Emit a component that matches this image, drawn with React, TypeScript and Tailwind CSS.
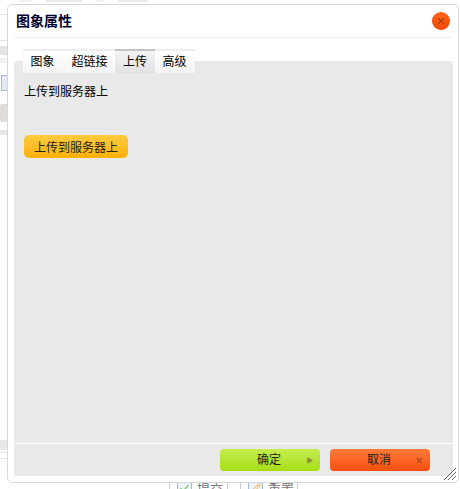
import { Check, Pencil, Play, X } from 'lucide-react';

const font = { fontFamily: '"Noto Sans CJK SC", sans-serif' };

export default function App() {
    return (
        <div className="relative w-[460px] h-[489px] overflow-hidden bg-white" style={font}>
            {/* page behind the dialog */}
            <div className="flex h-[2px] gap-[14px] pl-[20px]">
                <div className="w-[12px] bg-[#f0f0f4]" />
                <div className="w-[36px] bg-[#e8e8ee]" />
                <div className="w-[8px] bg-[#f0f0f4]" />
                <div className="w-[30px] bg-[#e8e8ee]" />
            </div>
            <div className="flex flex-col w-[7px]">
                <div className="h-[27px] mt-[12px] border-y border-[#e4e4e4]" />
                <div className="h-[9px] mt-[5px] bg-[#e4e4e4]" />
                <div className="h-[5px] mt-[3px] bg-[#f0f0f0]" />
                <div className="flex justify-end h-[16px] mt-[12px]">
                    <span className="w-[6px] h-[16px] bg-[#e6eaf6] border border-[#a8b8e0] border-r-0" />
                </div>
                <div className="h-[18px] mt-[13px] bg-[#dedcd9] rounded-l-[2px]" />
                <div className="h-[5px] mt-[8px] bg-[#e6e6e6]" />
                <div className="h-[10px] mt-[305px] bg-[#e8e8e8]" />
                <div className="h-[7px] mt-[2px] border-y border-[#e4e4e4]" />
            </div>
            <div className="absolute left-[169px] top-[482px] flex items-start h-[7px] text-[13px] leading-[14px] text-[#777]">
                <div className="flex h-[7px] w-[59px] pl-[7px] gap-[5px] border-x border-[#cccccc]">
                    <span className="flex justify-center w-[15px] h-[12px] bg-[#eef3fb] border border-[#9db8de] rounded-[2px]">
                        <Check size={11} strokeWidth={3} className="text-[#7ecb7e]" />
                    </span>
                    <span>提交</span>
                </div>
                <div className="flex h-[7px] w-[58px] ml-[12px] pl-[7px] gap-[5px] border-x border-[#cccccc]">
                    <span className="flex justify-center w-[15px] h-[12px] bg-[#eef3fb] border border-[#9db8de] rounded-[2px]">
                        <Pencil size={10} strokeWidth={3} className="text-[#eec98a]" />
                    </span>
                    <span>重置</span>
                </div>
            </div>

            {/* dialog */}
            <div className="absolute left-[7px] top-[4px] w-[452px] h-[479px] flex flex-col bg-white border border-[#d8d8d8] rounded-[5px] pl-[6px] pr-[5px] pb-[6px]">
                <div className="flex items-center justify-between h-[33px] border-b border-[#ececec] mr-[2px]">
                    <span className="text-[14px] font-bold text-[#000030] pl-[2px] pb-[2px]">图象属性</span>
                    <span className="flex items-center justify-center w-[18px] h-[18px] mr-[1px] rounded-full bg-[radial-gradient(circle_at_50%_30%,#ff6a1a,#f23c00)]">
                        <X size={10} strokeWidth={3} className="text-[#b03c10]" />
                    </span>
                </div>
                <div className="relative flex-1 flex flex-col mt-[23px] bg-[#e9e9e9] rounded-[3px]">
                    <div className="absolute left-[9px] top-[-12px] flex h-[24px] text-[12px] text-black border-t-[2px] border-[#eeeeee] bg-gradient-to-b from-white to-[#f4f4f4]">
                        <span className="flex items-center justify-center w-[41px] pb-[2px] pr-[2px]">图象</span>
                        <span className="flex items-center justify-center w-[51px] pb-[2px]">超链接</span>
                        <span className="flex items-center justify-center w-[40px] -mt-[2px] pb-[2px] border-t-[2px] border-[#c4c4c4] bg-gradient-to-b from-[#f4f4f4] to-[#e2e2e2]">上传</span>
                        <span className="flex items-center justify-center w-[40px] pb-[2px] pr-[1px]">高级</span>
                    </div>
                    <div className="flex-1 pt-[21px] pl-[10px]">
                        <div className="text-[12px] leading-[18px] text-black">上传到服务器上</div>
                        <button className="block mt-[35px] w-[104px] h-[23px] rounded-[5px] text-[12px] text-[#222] bg-gradient-to-b from-[#fecb3c] to-[#fbb000]">上传到服务器上</button>
                    </div>
                    <div className="flex items-center justify-end h-[33px] border-t border-white pr-[23px] gap-[10px]">
                        <button className="relative w-[100px] h-[22px] pb-[2px] pr-[2px] rounded-[4px] text-[12px] text-[#222] bg-gradient-to-b from-[#c4ec4c] to-[#a8de0c]">
                            确定
                            <Play size={7} className="absolute right-[7px] top-[8px] text-[#8a8a3a] fill-[#8a8a3a]" />
                        </button>
                        <button className="relative w-[100px] h-[22px] pb-[2px] pr-[2px] rounded-[4px] text-[12px] text-[#222] bg-gradient-to-b from-[#ff7a38] to-[#f84e08]">
                            取消
                            <X size={9} strokeWidth={3} className="absolute right-[6px] top-[7px] text-[#a84a20]" />
                        </button>
                    </div>
                </div>
                <svg className="absolute right-[1px] bottom-[1px]" width="14" height="14" viewBox="0 0 14 14" stroke="#666" strokeWidth="1">
                    <path d="M1 13 L13 1 M5 13 L13 5 M9 13 L13 9" />
                </svg>
            </div>
        </div>
    );
}
